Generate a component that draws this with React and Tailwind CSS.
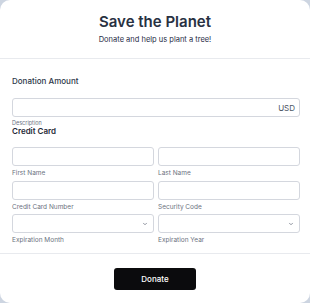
import { ChevronDown } from "lucide-react";

const Field = ({ label, select }) => (
  <div className="flex flex-col">
    <div className="relative h-[19px] rounded-[3px] border border-[#d4d7de] bg-white">
      {select && (
        <ChevronDown className="absolute right-[5px] top-[6px] h-[6px] w-[6px] text-[#6b7280]" strokeWidth={3} />
      )}
    </div>
    <span className="mt-[3px] text-[6.5px] leading-[8px] text-[#6b7280]">{label}</span>
  </div>
);

const App = () => {
  return (
    <div className="min-h-screen bg-[#cdd5e1]" style={{ fontFamily: "Inter, 'Liberation Sans', sans-serif" }}>
      <div className="flex h-[303px] w-full flex-col rounded-[10px] bg-white">
        <div className="flex flex-col items-center border-b border-[#e8eaee] pb-[13px] pt-[12px]">
          <h1 className="text-[15px] font-semibold leading-[20px] text-[#283142]">Save the Planet</h1>
          <p className="mt-[3px] text-[7.5px] leading-[10px] text-[#1f2b45]">Donate and help us plant a tree!</p>
        </div>

        <div className="pl-[12px] pr-[10px] pt-[17px]">
          <h2 className="text-[8px] font-medium leading-[10px] text-[#2d3748]">Donation Amount</h2>
          <div className="mt-[12px] flex h-[19px] items-center justify-end rounded-[3px] border border-[#d4d7de] pr-[4px]">
            <span className="text-[8px] text-[#4b5563]">USD</span>
          </div>
          <p className="mt-[3px] text-[5.5px] leading-[7px] text-[#6b7280]">Description</p>
          <h3 className="text-[8px] font-semibold leading-[9px] text-[#1f2937]">Credit Card</h3>

          <div className="mt-[11px] grid grid-cols-2 gap-x-[4px] gap-y-[3.5px]">
            <Field label="First Name" />
            <Field label="Last Name" />
            <Field label="Credit Card Number" />
            <Field label="Security Code" />
            <Field label="Expiration Month" select />
            <Field label="Expiration Year" select />
          </div>
        </div>

        <div className="mt-[9px] flex justify-center border-t border-[#e8eaee] pt-[14px]">
          <button className="h-[22px] w-[82px] rounded-[3px] bg-[#0b0b0d] text-[8px] font-medium text-white">
            Donate
          </button>
        </div>
      </div>
    </div>
  );
};

export default App;
